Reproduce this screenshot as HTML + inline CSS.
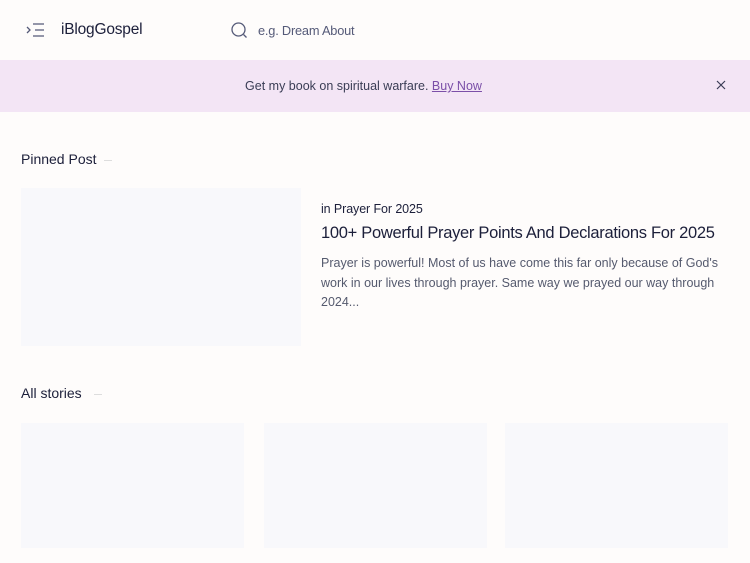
<!DOCTYPE html>
<html><head><meta charset="utf-8"><style>
*{margin:0;padding:0;box-sizing:border-box}
body{width:750px;height:563px;overflow:hidden;background:#fefcfb;font-family:"Liberation Sans",sans-serif;color:#1c1f3a;position:relative}
.a{position:absolute}
.ph{background:#f8f8fb}
</style></head><body>
<svg class="a" style="left:26px;top:22px" width="20" height="16" viewBox="0 0 20 16" fill="none" stroke="#555a78" stroke-width="1.3"><path d="M1 5l3 3-3 3M7 2h11M9 8h9M7 14h11"/></svg>
<div class="a" style="left:61px;top:21px;font-size:15.5px;letter-spacing:-0.2px;color:#1c1f3a">iBlogGospel</div>
<svg class="a" style="left:231px;top:22px" width="17" height="17" viewBox="0 0 17 17" fill="none" stroke="#555a78" stroke-width="1.3"><circle cx="7.5" cy="7.5" r="6.5"/><path d="M12.5 12.5l3 3"/></svg>
<div class="a" style="left:258px;top:23px;font-size:12.8px;letter-spacing:-0.2px;color:#555a78">e.g. Dream About</div>
<div class="a" style="left:0;top:60px;width:750px;height:52px;background:#f3e5f5"></div>
<div class="a" style="left:0;top:79px;width:727px;text-align:center;font-size:12.5px;color:#3a3d55">Get my book on spiritual warfare. <span style="color:#7b4fa8;text-decoration:underline">Buy Now</span></div>
<svg class="a" style="left:716px;top:80px" width="10" height="10" viewBox="0 0 10 10" stroke="#3a3d55" stroke-width="1.2"><path d="M1 1l8 8M9 1l-8 8"/></svg>
<div class="a" style="left:21px;top:151px;font-size:14px">Pinned Post</div>
<div class="a" style="left:104px;top:160px;width:8px;height:1px;background:#ddd"></div>
<div class="a ph" style="left:21px;top:188px;width:280px;height:158px"></div>
<div class="a" style="left:321px;top:202px;font-size:12.5px;letter-spacing:-0.1px;color:#1c1f3a">in Prayer For 2025</div>
<div class="a" style="left:321px;top:224px;font-size:16.5px;letter-spacing:-0.3px;color:#1c1f3a">100+ Powerful Prayer Points And Declarations For 2025</div>
<div class="a" style="left:321px;top:254px;width:400px;font-size:12.5px;line-height:19.5px;color:#555a6e">Prayer is powerful! Most of us have come this far only because of God's work in our lives through prayer. Same way we prayed our way through 2024...</div>
<div class="a" style="left:21px;top:385px;font-size:14px">All stories</div>
<div class="a" style="left:94px;top:394px;width:8px;height:1px;background:#ddd"></div>
<div class="a ph" style="left:21px;top:423px;width:223px;height:125px"></div>
<div class="a ph" style="left:264px;top:423px;width:223px;height:125px"></div>
<div class="a ph" style="left:505px;top:423px;width:223px;height:125px"></div>
</body></html>
